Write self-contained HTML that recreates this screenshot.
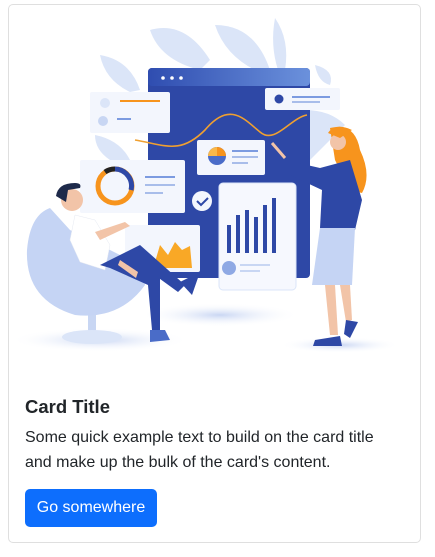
<!DOCTYPE html>
<html><head><meta charset="utf-8"><style>
body{margin:0;background:#fff;font-family:"Segoe UI","Liberation Sans",sans-serif;}
.card{position:absolute;left:8px;top:4px;width:413px;height:539px;border:1px solid #dfdfdf;border-radius:5px;box-sizing:border-box;}
svg{position:absolute;left:0;top:0}
h5{position:absolute;left:25px;top:393px;margin:0;font-size:18.5px;font-weight:bold;color:#212529;line-height:28px;}
p{position:absolute;left:25px;top:425px;margin:0;font-size:16px;line-height:25px;color:#212529;width:362px;}
.btn{position:absolute;left:25px;top:489px;width:132px;height:38px;background:#0d6efd;border-radius:5px;color:#fff;font-size:16px;line-height:38px;text-align:center;}
</style></head><body>
<div class="card"></div>
<svg width="435" height="370" viewBox="0 0 435 370">
<defs>
<linearGradient id="top" x1="0" x2="1"><stop offset="0" stop-color="#2f4db0"/><stop offset="1" stop-color="#6b91dc"/></linearGradient>
<radialGradient id="sh"><stop offset="0" stop-color="#c9d6f3"/><stop offset="1" stop-color="#fff" stop-opacity="0"/></radialGradient>
</defs>
<g fill="#dbe5f8">
<path d="M150 30 Q185 20 210 60 L200 70 Q160 60 150 30Z"/>
<path d="M215 25 Q255 25 270 70 L255 70 Q225 55 215 25Z"/>
<path d="M275 18 Q290 40 285 70 L278 70 Q270 45 275 18Z"/>
<path d="M100 55 Q130 60 140 90 L130 92 Q105 80 100 55Z"/>
<path d="M315 65 Q335 70 330 85 Q318 82 315 65Z"/>
<path d="M305 110 Q330 110 345 125 L310 160 Z"/>
<path d="M95 135 Q120 140 130 160 L110 160 Q95 150 95 135Z"/>
</g>
<ellipse cx="220" cy="315" rx="80" ry="12" fill="url(#sh)"/>
<ellipse cx="100" cy="340" rx="90" ry="12" fill="url(#sh)"/>
<ellipse cx="340" cy="345" rx="60" ry="8" fill="url(#sh)"/>
<rect x="148" y="68" width="162" height="210" rx="4" fill="#2e48a6"/>
<rect x="148" y="68" width="162" height="18" rx="4" fill="url(#top)"/>
<circle cx="163" cy="78" r="1.8" fill="#fff"/><circle cx="172" cy="78" r="1.8" fill="#fff"/><circle cx="181" cy="78" r="1.8" fill="#fff"/>
<path d="M135 140 C165 145 180 155 205 130 C230 100 245 120 260 132 C275 145 290 118 307 115" stroke="#f0a030" stroke-width="1.6" fill="none"/>
<rect x="90" y="92" width="80" height="41" rx="2" fill="#f3f6fd"/>
<rect x="120" y="100" width="40" height="2" fill="#f7941d"/>
<circle cx="105" cy="103" r="5" fill="#dbe5f8"/><circle cx="103" cy="121" r="5" fill="#c8d6f3"/>
<rect x="117" y="118" width="14" height="2" fill="#7c9be0"/>
<rect x="265" y="88" width="75" height="22" rx="2" fill="#f3f6fd"/>
<circle cx="279" cy="99" r="4.5" fill="#2e48a6"/>
<rect x="292" y="96" width="38" height="2" fill="#7c9be0"/><rect x="292" y="101" width="28" height="2" fill="#a8bdea"/>
<rect x="80" y="160" width="105" height="53" rx="2" fill="#f3f6fd"/>
<circle cx="115" cy="186" r="17" fill="none" stroke="#f7941d" stroke-width="5"/>
<path d="M115 169 A17 17 0 0 1 131 190" stroke="#2e48a6" stroke-width="5" fill="none"/>
<path d="M105 172 A17 17 0 0 1 115 169" stroke="#222" stroke-width="5" fill="none"/>
<rect x="145" y="176" width="30" height="2" fill="#7c9be0"/><rect x="145" y="184" width="30" height="2" fill="#a8bdea"/><rect x="145" y="192" width="18" height="2" fill="#a8bdea"/>
<rect x="197" y="140" width="68" height="35" rx="2" fill="#f3f6fd"/>
<circle cx="217" cy="156" r="9" fill="#4a6cc8"/><path d="M217 156 L217 147 A9 9 0 0 1 226 156Z" fill="#f7941d"/><path d="M217 156 L208 156 A9 9 0 0 1 217 147Z" fill="#f9b84a"/>
<rect x="232" y="150" width="26" height="2" fill="#7c9be0"/><rect x="232" y="156" width="26" height="2" fill="#a8bdea"/><rect x="232" y="162" width="16" height="2" fill="#a8bdea"/>
<circle cx="202" cy="201" r="10" fill="#f3f6fd"/><path d="M197 201 l4 4 l7 -7" stroke="#2e48a6" stroke-width="2" fill="none"/>
<rect x="125" y="225" width="75" height="47" rx="2" fill="#f3f6fd"/>
<path d="M155 262 L160 245 L168 255 L175 242 L182 250 L190 246 L192 268 L155 268Z" fill="#f9a826"/>
<rect x="219" y="183" width="77" height="107" rx="4" fill="#f6f8fe" stroke="#dbe5f8"/>
<g fill="#2e48a6"><rect x="227" y="225" width="4" height="28"/><rect x="236" y="215" width="4" height="38"/><rect x="245" y="210" width="4" height="43"/><rect x="254" y="217" width="4" height="36"/><rect x="263" y="205" width="4" height="48"/><rect x="272" y="198" width="4" height="55"/></g>
<circle cx="229" cy="268" r="7" fill="#8fa9e4"/><rect x="240" y="264" width="30" height="2" fill="#c8d6f3"/><rect x="240" y="270" width="20" height="2" fill="#c8d6f3"/>
<rect x="88" y="300" width="8" height="36" fill="#c8d6f3"/>
<ellipse cx="92" cy="337" rx="30" ry="7" fill="#dbe5f8"/>
<path d="M50 208 Q30 215 27 250 Q25 300 75 315 Q120 320 145 285 L140 265 L70 230 Z" fill="#c5d4f4"/>
<path d="M75 215 L95 220 L110 245 L105 270 L80 262 L70 240Z" fill="#fff" stroke="#e5e9f2" stroke-width=".5"/>
<circle cx="72" cy="200" r="11" fill="#f2c4a8"/>
<path d="M56 196 Q58 183 75 183 Q82 183 80 188 L68 190 L66 202 Z" fill="#1e2a4a"/>
<path d="M95 232 L125 222 L130 226 L100 240Z" fill="#f2c4a8"/>
<path d="M100 265 L140 245 L185 285 L178 292 L145 268 L160 275 L160 330 L152 330 L148 285 L110 268Z" fill="#2e48a6"/>
<path d="M180 282 L200 272 L192 295Z" fill="#2e48a6"/>
<path d="M150 330 L165 330 L170 340 L150 342Z" fill="#4a6cc8"/>
<path d="M120 260 L138 272 L136 278 L118 265Z" fill="#f2c4a8"/>
<path d="M330 128 Q355 122 360 150 Q372 175 362 193 L350 190 L335 160Z" fill="#f7941d"/>
<circle cx="338" cy="142" r="8" fill="#f2c4a8"/>
<path d="M328 133 Q335 122 352 130 L340 138Z" fill="#f7941d"/>
<path d="M320 168 L350 160 L362 200 L355 230 L320 228 L322 190 L290 175 L285 160Z" fill="#2e48a6"/>
<path d="M320 228 L355 228 L352 285 L312 285Z" fill="#c5d4f4"/>
<path d="M325 285 L335 285 L338 335 L330 335Z" fill="#f2c4a8"/><path d="M340 285 L350 285 L352 320 L346 322Z" fill="#f2c4a8"/>
<path d="M315 340 L340 336 L342 346 L313 346Z" fill="#2e48a6"/><path d="M346 320 L358 322 L350 338 L344 334Z" fill="#2e48a6"/>
<path d="M272 143 L285 158" stroke="#f2c4a8" stroke-width="3"/>
</svg>
<h5>Card Title</h5>
<p>Some quick example text to build on the card title and make up the bulk of the card's content.</p>
<div class="btn">Go somewhere</div>
</body></html>
